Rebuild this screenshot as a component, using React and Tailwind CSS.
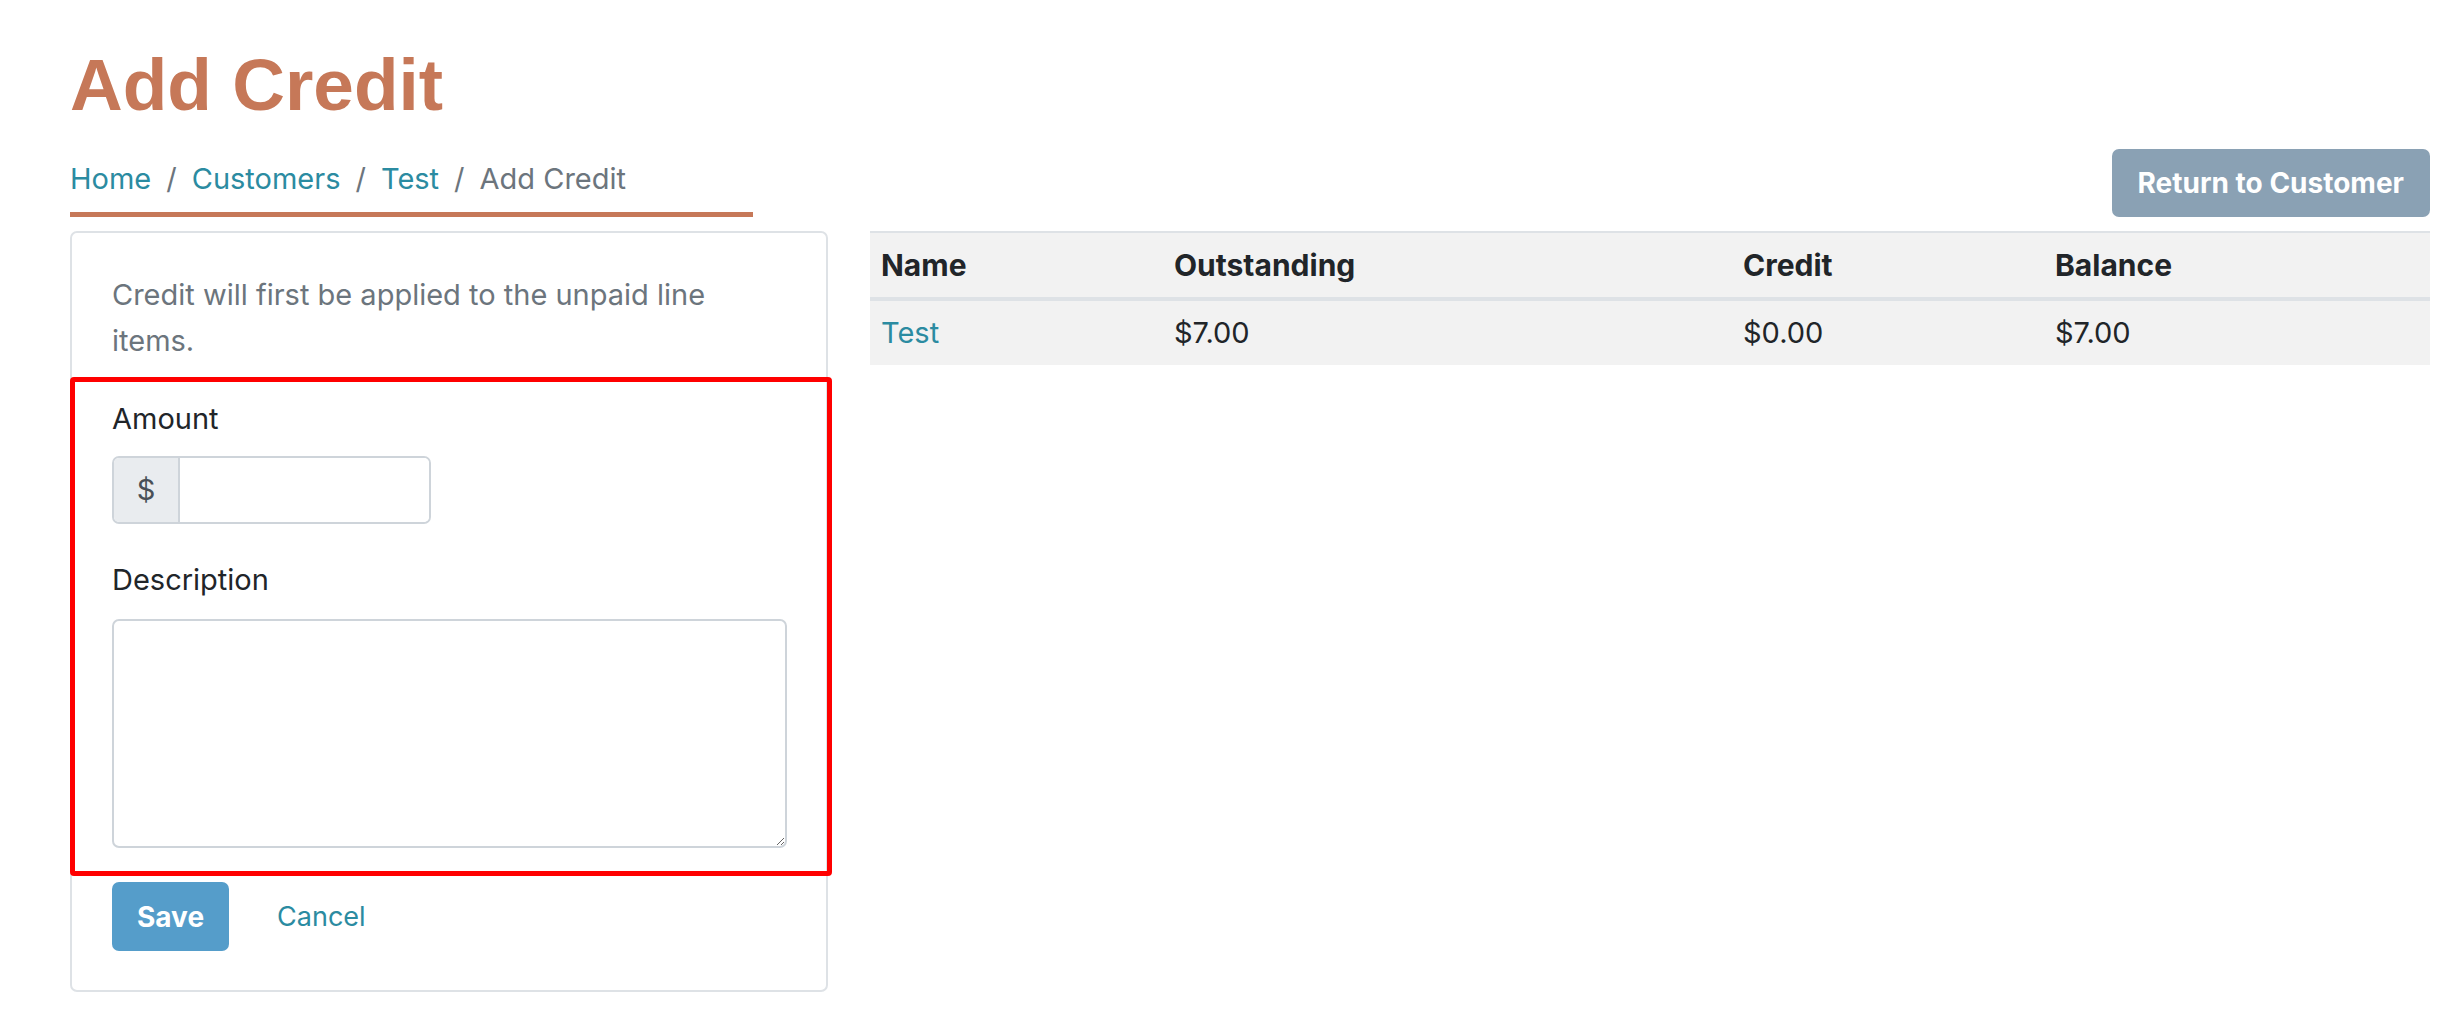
import React from "react";

export default function App() {
  const link = "text-[#2b8ba1]";
  return (
    <div className="min-h-screen w-full bg-white pl-[70px] pr-[20px] pt-[40px] font-['Inter',sans-serif] text-[29px] leading-[42px] text-[#212529]">
      <h1 className="font-['Liberation_Sans',Arial,sans-serif] text-[73px] leading-[90px] font-bold text-[#c67858]">
        Add Credit
      </h1>

      <div className="mt-[19px] grid grid-cols-[758px_1fr] gap-x-[42px]">
        {/* Left column */}
        <div>
          <nav className="w-[683px] border-b-[5px] border-[#c67858] pt-[9px] pb-[12px]">
            <ol className="flex items-center">
              <li className={link}>Home</li>
              <li className="px-[15px] text-[#6c757d]">/</li>
              <li className={link}>Customers</li>
              <li className="px-[15px] text-[#6c757d]">/</li>
              <li className={link}>Test</li>
              <li className="px-[15px] text-[#6c757d]">/</li>
              <li className="text-[#6c757d]">Add Credit</li>
            </ol>
          </nav>

          <div className="mt-[14px] rounded-[7px] border-2 border-[#dee2e6] px-[40px] pt-[39px] pb-[39px]">
            <p className="max-w-[650px] leading-[46px] text-[#6c757d]">
              Credit will first be applied to the unpaid line items.
            </p>

            <div className="-ml-[42px] -mr-[46px] mt-[13px] rounded-[4px] border-[5px] border-[#ff0000] pl-[37px] pr-[40px] pt-[16px] pb-[23px]">
              <label className="block">Amount</label>
              <div className="mt-[16px] flex h-[68px] w-[319px] overflow-hidden rounded-[7px] border-2 border-[#ced4da]">
                <span className="flex w-[66px] items-center justify-center border-r-2 border-[#ced4da] bg-[#e9ecef] text-[#495057]">
                  $
                </span>
                <input className="min-w-0 flex-1 bg-white px-3 outline-none" />
              </div>

              <label className="mt-[35px] block">Description</label>
              <textarea className="mt-[18px] block h-[229px] w-full rounded-[7px] border-2 border-[#ced4da] bg-white outline-none" />
            </div>

            <div className="mt-[6px] flex items-center">
              <button className="h-[69px] rounded-[7px] bg-[#559dca] px-[25px] text-[28px] font-bold text-white">
                Save
              </button>
              <span className={`ml-[48px] text-[27px] ${link}`}>Cancel</span>
            </div>
          </div>
        </div>

        {/* Right column */}
        <div>
          <div className="flex justify-end">
            <button className="h-[68px] rounded-[7px] bg-[#8aa1b4] px-[26px] text-[28px] font-bold text-white">
              Return to Customer
            </button>
          </div>

          <div className="mt-[14px] border-t-2 border-[#dee2e6] bg-[#f2f2f2]">
            <div className="grid grid-cols-[293px_569px_312px_1fr] border-b-[4px] border-[#dee2e6] text-[30px] font-bold">
              <div className="px-[11px] py-[11px]">Name</div>
              <div className="px-[11px] py-[11px]">Outstanding</div>
              <div className="px-[11px] py-[11px]">Credit</div>
              <div className="px-[11px] py-[11px]">Balance</div>
            </div>
            <div className="grid grid-cols-[293px_569px_312px_1fr]">
              <div className={`px-[11px] py-[11px] ${link}`}>Test</div>
              <div className="px-[11px] py-[11px]">$7.00</div>
              <div className="px-[11px] py-[11px]">$0.00</div>
              <div className="px-[11px] py-[11px]">$7.00</div>
            </div>
          </div>
        </div>
      </div>
    </div>
  );
}
